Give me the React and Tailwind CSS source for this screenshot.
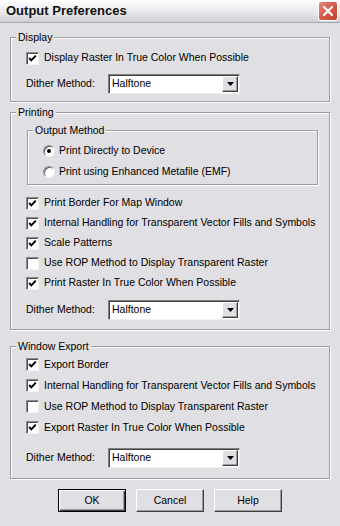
import React from 'react'

const font = { fontFamily: '"Liberation Sans", Arial, sans-serif' }

function Check({ checked }) {
  return (
    <span className="w-[13px] h-[13px] shrink-0 bg-white border border-[#8c8c90] border-b-[#f4f4f4] border-r-[#f4f4f4] shadow-[inset_1px_1px_0_#505050] flex items-center justify-center">
      {checked && (
        <svg width="11" height="11" viewBox="0 0 11 11">
          <path d="M2.2 5 L4.3 7.4 L8.8 2.6" stroke="#000" strokeWidth="1.9" fill="none" />
        </svg>
      )}
    </span>
  )
}

function CheckRow({ checked, label, h = 'h-[20px]' }) {
  return (
    <div className={`flex items-center ${h} pl-[15px]`}>
      <Check checked={checked} />
      <span className="ml-[5px] text-[10.5px] text-black whitespace-nowrap">{label}</span>
    </div>
  )
}

function Radio({ checked, label }) {
  return (
    <div className="flex items-center h-[21px] pl-[15px]">
      <span className="w-[12px] h-[12px] rounded-full bg-white border border-[#8c8c90] border-b-[#f4f4f4] border-r-[#f4f4f4] flex items-center justify-center shadow-[inset_1px_1px_0_#606060]">
        {checked && <span className="w-[4px] h-[4px] rounded-full bg-black" />}
      </span>
      <span className="ml-[4px] text-[10.5px] text-black whitespace-nowrap">{label}</span>
    </div>
  )
}

function Dither({ mt }) {
  return (
    <div className={`flex items-center pl-[15px] ${mt}`}>
      <span className="w-[82px] text-[10.5px] text-black">Dither Method:</span>
      <div className="w-[132px] h-[20px] bg-white border border-[#808080] border-b-[#f0f0f0] border-r-[#f0f0f0] shadow-[inset_1px_1px_0_#404040] flex items-center justify-between pl-[3px] pr-[1px]">
        <span className="text-[10.5px] text-black">Halftone</span>
        <span className="w-[16px] h-[16px] bg-[#e0dfe3] border border-white border-b-[#404040] border-r-[#404040] shadow-[inset_-1px_-1px_0_#9a9a9e] flex items-center justify-center">
          <svg width="7" height="4" viewBox="0 0 7 4">
            <path d="M0 0 H7 L3.5 4 Z" fill="#000" />
          </svg>
        </span>
      </div>
    </div>
  )
}

function Group({ label, className, children }) {
  return (
    <div className={`relative border border-[#9c9ca0] shadow-[inset_1px_1px_0_#fff,1px_1px_0_#fff] ${className}`}>
      <span className="absolute -top-[8px] left-[5px] px-[2px] bg-[#e0dfe3] text-[10.5px] leading-[14px] text-black">
        {label}
      </span>
      {children}
    </div>
  )
}

function Button({ label, primary }) {
  return (
    <button
      className={`w-[68px] h-[23px] text-[10.5px] text-black bg-[#e0dfe3] ${
        primary ? 'border border-black shadow-[inset_1px_1px_0_#fff,inset_-1px_-1px_0_#404040,inset_-2px_-2px_0_#9a9a9e]' : 'border border-white border-b-[#404040] border-r-[#404040] shadow-[inset_-1px_-1px_0_#9a9a9e]'
      }`}
    >
      {label}
    </button>
  )
}

export default function App() {
  return (
    <div className="w-[340px] h-[526px] bg-[#e0dfe3] overflow-hidden" style={font}>
      {/* Title bar */}
      <div className="h-[23px] flex items-center justify-between pl-[6px] pr-[2px] bg-gradient-to-b from-[#ffffff] via-[#ebebef] to-[#cfcfd6] border-b border-[#a8a8b0]">
        <span className="text-[13px] font-bold text-[#111]">Output Preferences</span>
        <span className="w-[20px] h-[20px] rounded-[3px] border border-white bg-gradient-to-br from-[#e9897b] via-[#d4594a] to-[#c2402f] flex items-center justify-center">
          <svg width="12" height="12" viewBox="0 0 12 12">
            <path d="M2 2 L10 10 M10 2 L2 10" stroke="#fff" strokeWidth="2.2" strokeLinecap="round" />
          </svg>
        </span>
      </div>

      <div className="px-[10px] pt-[14px]">
        <Group label="Display" className="h-[65px] pt-[10px]">
          <CheckRow checked label="Display Raster In True Color When Possible" />
          <Dither mt="mt-[6px]" />
        </Group>

        <Group label="Printing" className="mt-[10px] h-[218px] pt-[17px]">
          <div className="ml-[16px] mr-[11px]">
            <Group label="Output Method" className="h-[55px] pt-[9px]">
              <Radio checked label="Print Directly to Device" />
              <Radio label="Print using Enhanced Metafile (EMF)" />
            </Group>
          </div>
          <div className="mt-[8px]">
            <CheckRow checked label="Print Border For Map Window" />
            <CheckRow checked label="Internal Handling for Transparent Vector Fills and Symbols" />
            <CheckRow checked label="Scale Patterns" />
            <CheckRow label="Use ROP Method to Display Transparent Raster" />
            <CheckRow checked label="Print Raster In True Color When Possible" />
          </div>
          <Dither mt="mt-[7px]" />
        </Group>

        <Group label="Window Export" className="mt-[16px] h-[133px] pt-[7px]">
          <CheckRow checked h="h-[21px]" label="Export Border" />
          <CheckRow checked h="h-[21px]" label="Internal Handling for Transparent Vector Fills and Symbols" />
          <CheckRow h="h-[21px]" label="Use ROP Method to Display Transparent Raster" />
          <CheckRow checked h="h-[21px]" label="Export Raster In True Color When Possible" />
          <Dither mt="mt-[10px]" />
        </Group>

        <div className="mt-[10px] flex justify-center gap-[10px]">
          <Button primary label="OK" />
          <Button label="Cancel" />
          <Button label="Help" />
        </div>
      </div>
    </div>
  )
}
